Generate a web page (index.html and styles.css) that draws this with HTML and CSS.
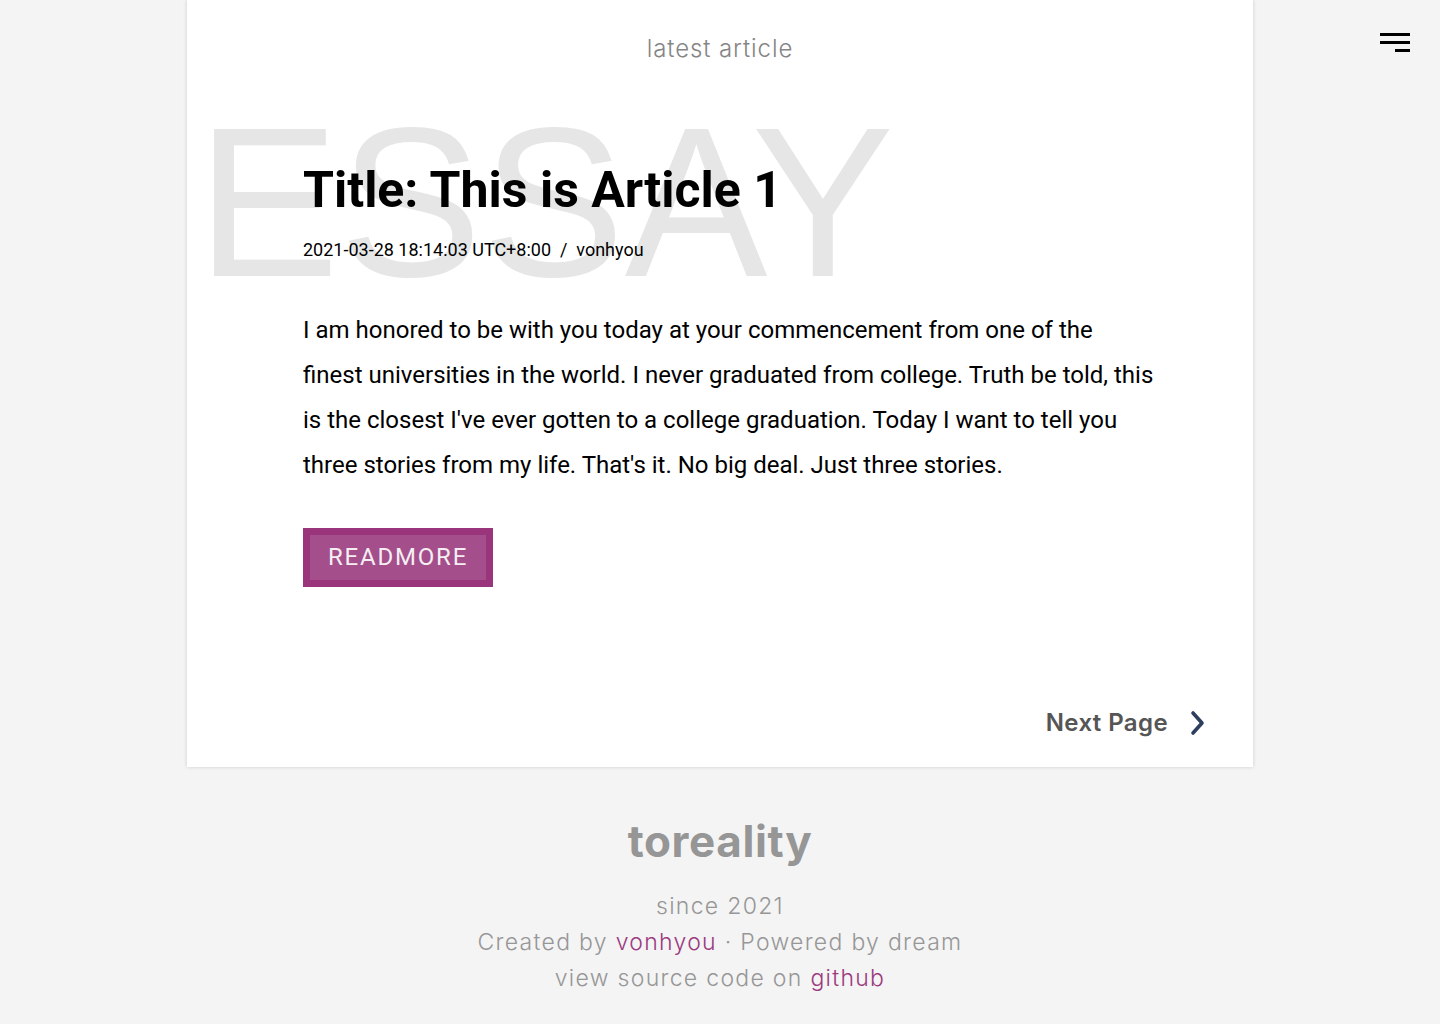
FILE: index.html
```html
<!DOCTYPE html>
<html lang="en">
<head>
<meta charset="utf-8">
<title>toreality</title>
<link rel="stylesheet" href="styles.css">
</head>
<body>
<button class="menu" aria-label="menu">
  <span class="bar"></span>
  <span class="bar"></span>
  <span class="bar short"></span>
</button>
<main class="card">
  <h2 class="section-title">latest article</h2>
  <article class="post">
    <header class="post-head">
      <div class="watermark" aria-hidden="true">ESSAY</div>
      <h1 class="post-title">Title: This is Article 1</h1>
      <p class="post-meta">2021-03-28 18:14:03 UTC+8:00 &nbsp;/&nbsp; vonhyou</p>
    </header>
    <p class="post-excerpt">I am honored to be with you today at your commencement from one of the finest universities in the world. I never graduated from college. Truth be told, this is the closest I've ever gotten to a college graduation. Today I want to tell you three stories from my life. That's it. No big deal. Just three stories.</p>
    <a class="readmore" href="#">READMORE</a>
  </article>
  <nav class="pager">
    <a class="next" href="#">Next Page
      <svg class="chev" width="18" height="26" viewBox="0 0 18 26"><path d="M4 3 L13 13 L4 23" fill="none" stroke="#2d3e5e" stroke-width="3.6" stroke-linecap="round" stroke-linejoin="round"/></svg>
    </a>
  </nav>
</main>
<footer class="site-footer">
  <div class="brand">toreality</div>
  <p class="foot-line">since 2021</p>
  <p class="foot-line">Created by <a href="#">vonhyou</a> · Powered by dream</p>
  <p class="foot-line">view source code on <a href="#">github</a></p>
</footer>
</body>
</html>
```

FILE: styles.css
```css
* { box-sizing: border-box; }
html, body { margin: 0; padding: 0; }
body {
  background: #f4f4f4;
  font-family: Roboto, "Liberation Sans", sans-serif;
  color: #000;
}
a { text-decoration: none; }

.menu {
  position: fixed;
  top: 33px;
  right: 30px;
  width: 30px;
  height: 20px;
  padding: 0;
  border: 0;
  background: transparent;
  display: flex;
  flex-direction: column;
  align-items: flex-end;
  gap: 5px;
  cursor: pointer;
}
.menu .bar {
  display: block;
  width: 30px;
  height: 3px;
  background: #000;
}
.menu .bar.short { width: 15px; }

.card {
  width: 1066px;
  margin: 0 auto;
  background: #fff;
  box-shadow: 0 0 4px rgba(0, 0, 0, 0.16);
  padding: 31px 0 0;
}

.section-title {
  margin: 0;
  text-align: center;
  font-family: Inter, "Open Sans", sans-serif;
  font-weight: 300;
  font-size: 24px;
  letter-spacing: 0.9px;
  line-height: 36px;
  color: #858585;
}

.post {
  padding: 0 0 0 116px;
  width: 972px;
}
.post-head {
  position: relative;
  padding-top: 93px;
}
.watermark {
  position: absolute;
  left: -106.5px;
  top: 28px;
  font-family: "Liberation Sans", Arial, sans-serif;
  font-size: 214px;
  line-height: 214px;
  color: #e6e6e6;
  white-space: nowrap;
  z-index: 0;
}
.post-title {
  position: relative;
  margin: 0;
  font-size: 50px;
  line-height: 60px;
  font-weight: 700;
}
.post-meta {
  position: relative;
  margin: 18px 0 0;
  font-size: 18px;
  line-height: 24px;
}
.post-excerpt {
  margin: 46px 0 0;
  width: 852px;
  font-size: 24px;
  line-height: 45px;
}
.readmore {
  display: inline-block;
  margin-top: 40px;
  border: 7px solid #9a357c;
  background: #a44e8c;
  color: #f4eef2;
  font-size: 24px;
  line-height: 45px;
  letter-spacing: 1.8px;
  padding: 0 18px 0 18px;
}

.pager {
  display: flex;
  justify-content: flex-end;
  padding: 118px 46px 26px 0;
}
.next {
  display: flex;
  align-items: center;
  gap: 21px;
  font-family: Inter, "Open Sans", sans-serif;
  font-weight: 600;
  font-size: 24px;
  letter-spacing: 0.4px;
  line-height: 36px;
  color: #555;
}

.site-footer {
  text-align: center;
  padding: 46px 0 20px;
  font-family: Inter, "Open Sans", sans-serif;
  color: #979797;
}
.brand {
  font-weight: 700;
  font-size: 44px;
  letter-spacing: 0.6px;
  line-height: 56px;
  color: #969696;
  margin-bottom: 19px;
}
.foot-line {
  margin: 0;
  font-weight: 300;
  font-size: 23px;
  letter-spacing: 1.3px;
  line-height: 36px;
}
.foot-line a { color: #9b3a80; }
```
